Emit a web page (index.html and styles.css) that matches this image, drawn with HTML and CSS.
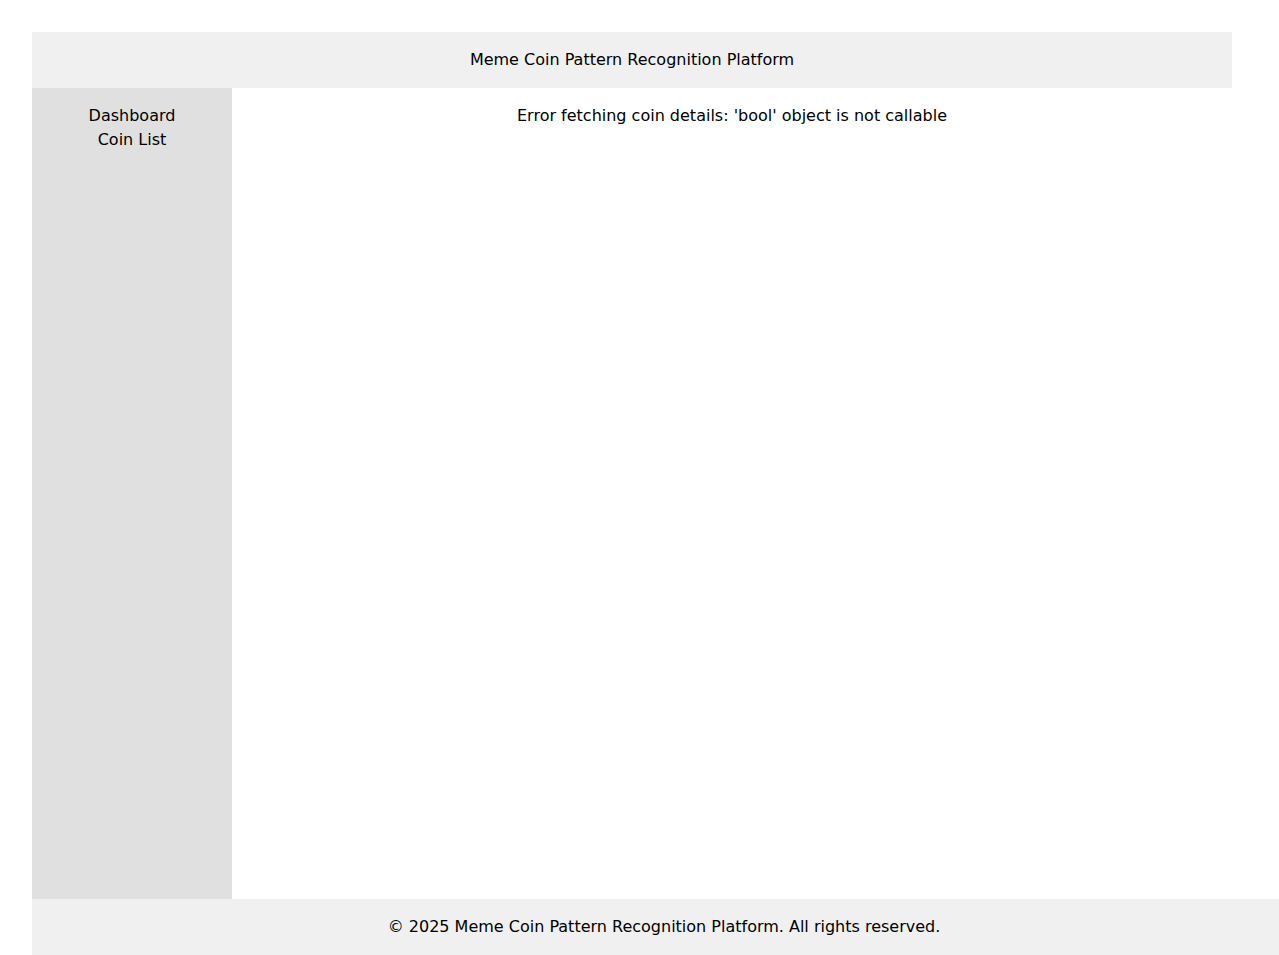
FILE: index.html
```html
<!DOCTYPE html>
<html lang="en">
<head>
<meta charset="utf-8">
<title>Meme Coin Pattern Recognition Platform</title>
<link rel="stylesheet" href="styles.css">
</head>
<body>
<div class="app">
  <header class="header">Meme Coin Pattern Recognition Platform</header>
  <div class="layout">
    <nav class="sidebar">
      <a class="nav-link" href="#">Dashboard</a>
      <a class="nav-link" href="#">Coin List</a>
    </nav>
    <main class="main">
      <p class="error">Error fetching coin details: 'bool' object is not callable</p>
    </main>
  </div>
</div>
<footer class="footer">© 2025 Meme Coin Pattern Recognition Platform. All rights reserved.</footer>
</body>
</html>
```
FILE: styles.css
```css
html, body {
  margin: 0;
  padding: 0;
}
body {
  margin: 32px;
  font-family: "DejaVu Sans", sans-serif;
  font-size: 16px;
  line-height: 24px;
  color: #000;
  background: #fff;
}
.app {
  max-width: 1200px;
}
.header {
  background: #f0f0f0;
  padding: 16px 0;
  text-align: center;
}
.layout {
  display: flex;
  height: calc(100vh - 56px);
}
.sidebar {
  width: 200px;
  flex: none;
  background: #e0e0e0;
  padding: 16px 0;
  box-sizing: border-box;
  display: flex;
  flex-direction: column;
  align-items: center;
}
.nav-link {
  color: #000;
  text-decoration: none;
}
.main {
  flex: 1;
  padding: 16px;
  text-align: center;
}
.error {
  margin: 0;
}
.footer {
  position: fixed;
  bottom: 0;
  width: calc(100% - 15px);
  background: #f0f0f0;
  padding: 16px 0;
  text-align: center;
}
```
